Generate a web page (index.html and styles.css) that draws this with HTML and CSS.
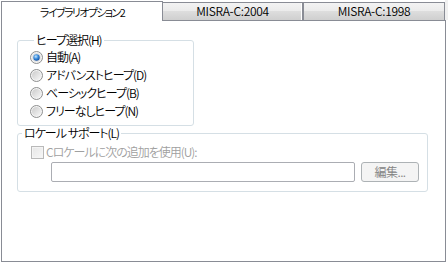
FILE: index.html
```html
<!DOCTYPE html>
<html lang="ja">
<head>
<meta charset="utf-8">
<link rel="stylesheet" href="styles.css">
</head>
<body>
<div class="dialog">
  <div class="tabs">
    <div class="tab active">ライブラリオプション2</div>
    <div class="tab mid">MISRA-C:2004</div>
    <div class="tab last">MISRA-C:1998</div>
    <div class="tab-fill"></div>
  </div>
  <div class="panel">
    <fieldset class="group heap">
      <legend>ヒープ選択(H)</legend>
      <div class="opt">
        <svg class="radio" width="13" height="13" viewBox="0 0 13 13"><defs><radialGradient id="rs" cx="0.4" cy="0.35" r="0.7"><stop offset="0" stop-color="#c9e6fb"/><stop offset="0.5" stop-color="#3b8ede"/><stop offset="1" stop-color="#0f4a9c"/></radialGradient></defs><circle cx="6.5" cy="6.5" r="6" fill="#f4f4f4" stroke="#8e8f8f"/><circle cx="6.5" cy="6.5" r="4.5" fill="#e2e2e2"/><circle cx="6.5" cy="6.5" r="3.2" fill="url(#rs)"/></svg>
        <span>自動(A)</span>
      </div>
      <div class="opt">
        <svg class="radio" width="13" height="13" viewBox="0 0 13 13"><defs><linearGradient id="ru" x1="0" y1="0" x2="1" y2="1"><stop offset="0" stop-color="#cbcbcb"/><stop offset="1" stop-color="#f7f7f7"/></linearGradient></defs><circle cx="6.5" cy="6.5" r="6" fill="#f4f4f4" stroke="#8e8f8f"/><circle cx="6.5" cy="6.5" r="4.5" fill="url(#ru)"/></svg>
        <span>アドバンストヒープ(D)</span>
      </div>
      <div class="opt">
        <svg class="radio" width="13" height="13" viewBox="0 0 13 13"><circle cx="6.5" cy="6.5" r="6" fill="#f4f4f4" stroke="#8e8f8f"/><circle cx="6.5" cy="6.5" r="4.5" fill="url(#ru)"/></svg>
        <span>ベーシックヒープ(B)</span>
      </div>
      <div class="opt">
        <svg class="radio" width="13" height="13" viewBox="0 0 13 13"><circle cx="6.5" cy="6.5" r="6" fill="#f4f4f4" stroke="#8e8f8f"/><circle cx="6.5" cy="6.5" r="4.5" fill="url(#ru)"/></svg>
        <span>フリーなしヒープ(N)</span>
      </div>
    </fieldset>
    <fieldset class="group locale">
      <legend>ロケール サポート(L)</legend>
      <div class="check">
        <span class="box"></span>
        <span class="dis">Cロケールに次の追加を使用(U):</span>
      </div>
      <div class="edit-row">
        <div class="input"></div>
        <div class="btn">編集...</div>
      </div>
    </fieldset>
  </div>
</div>
</body>
</html>
```
FILE: styles.css
```css
html, body {
  margin: 0;
  padding: 0;
  background: #ffffff;
}
body {
  font-family: "Noto Sans CJK JP", "Noto Sans", sans-serif;
  font-size: 12px;
  font-weight: 350;
  font-feature-settings: "palt";
  letter-spacing: -1px;
  color: #000;
  line-height: 14px;
}
.dialog {
  width: 448px;
  height: 263px;
  display: flex;
  flex-direction: column;
}
.tabs {
  display: flex;
  align-items: flex-end;
  height: 20px;
  padding-left: 1px;
}
.tab {
  box-sizing: border-box;
  height: 18px;
  border: 1px solid #898c95;
  border-bottom: none;
  background: linear-gradient(#f3f3f3, #ebebeb 45%, #dddddd 50%, #cfcfcf);
  text-align: center;
  line-height: 16px;
  color: #000;
  letter-spacing: -0.3px;
}
.tab.active {
  position: relative;
  z-index: 1;
  width: 162px;
  height: 20px;
  margin-bottom: -1px;
  background: #ffffff;
  border-bottom: none;
  line-height: 20px;
  border-right: 1px solid #898c95;
  font-size: 11px;
  letter-spacing: -1.6px;
}
.tab.mid {
  width: 140px;
  border-left: none;
  box-shadow: inset -1px 0 #ffffff;
}
.tab.last {
  width: 142px;
  border-left: 1px solid #898c95;
}
.tab-fill {
  flex: 1;
  height: 20px;
  background: #f0f0f0;
}
.panel {
  box-sizing: border-box;
  width: 445px;
  height: 242px;
  margin-left: 1px;
  border: 1px solid #898c95;
  padding: 12px 0 0 15px;
}
.group {
  margin: 0;
  border: 1px solid #d5dfe5;
  border-radius: 3px;
  box-sizing: border-box;
  min-width: 0;
}
.group legend {
  padding: 0 2px;
  margin-left: 4px;
  line-height: 14px;
}
.heap {
  width: 177px;
  padding: 1px 0 5px 12px;
}
.opt {
  display: flex;
  align-items: center;
  height: 18px;
  gap: 3px;
}
.radio {
  display: block;
  flex: none;
}
.locale {
  width: 411px;
  padding: 3px 0 9px 0;
}
.check {
  display: flex;
  align-items: center;
  height: 18px;
  padding-left: 13px;
  gap: 2px;
}
.box {
  box-sizing: border-box;
  width: 13px;
  height: 13px;
  border: 1px solid #b9b9b9;
  background: linear-gradient(135deg, #e6e6e6, #f7f7f7);
  box-shadow: inset 0 0 0 1px #f4f4f4;
}
.dis {
  color: #a0a0a0;
}
.edit-row {
  display: flex;
  align-items: center;
  gap: 6px;
  margin-top: 1px;
  padding-left: 33px;
}
.input {
  box-sizing: border-box;
  width: 304px;
  height: 20px;
  border: 1px solid #abadb3;
  border-radius: 2px;
  background: #ffffff;
}
.btn {
  box-sizing: border-box;
  width: 58px;
  height: 20px;
  border: 1px solid #adb2b5;
  border-radius: 3px;
  background: #f4f4f4;
  color: #838383;
  text-align: center;
  line-height: 18px;
  letter-spacing: -0.5px;
}
```
